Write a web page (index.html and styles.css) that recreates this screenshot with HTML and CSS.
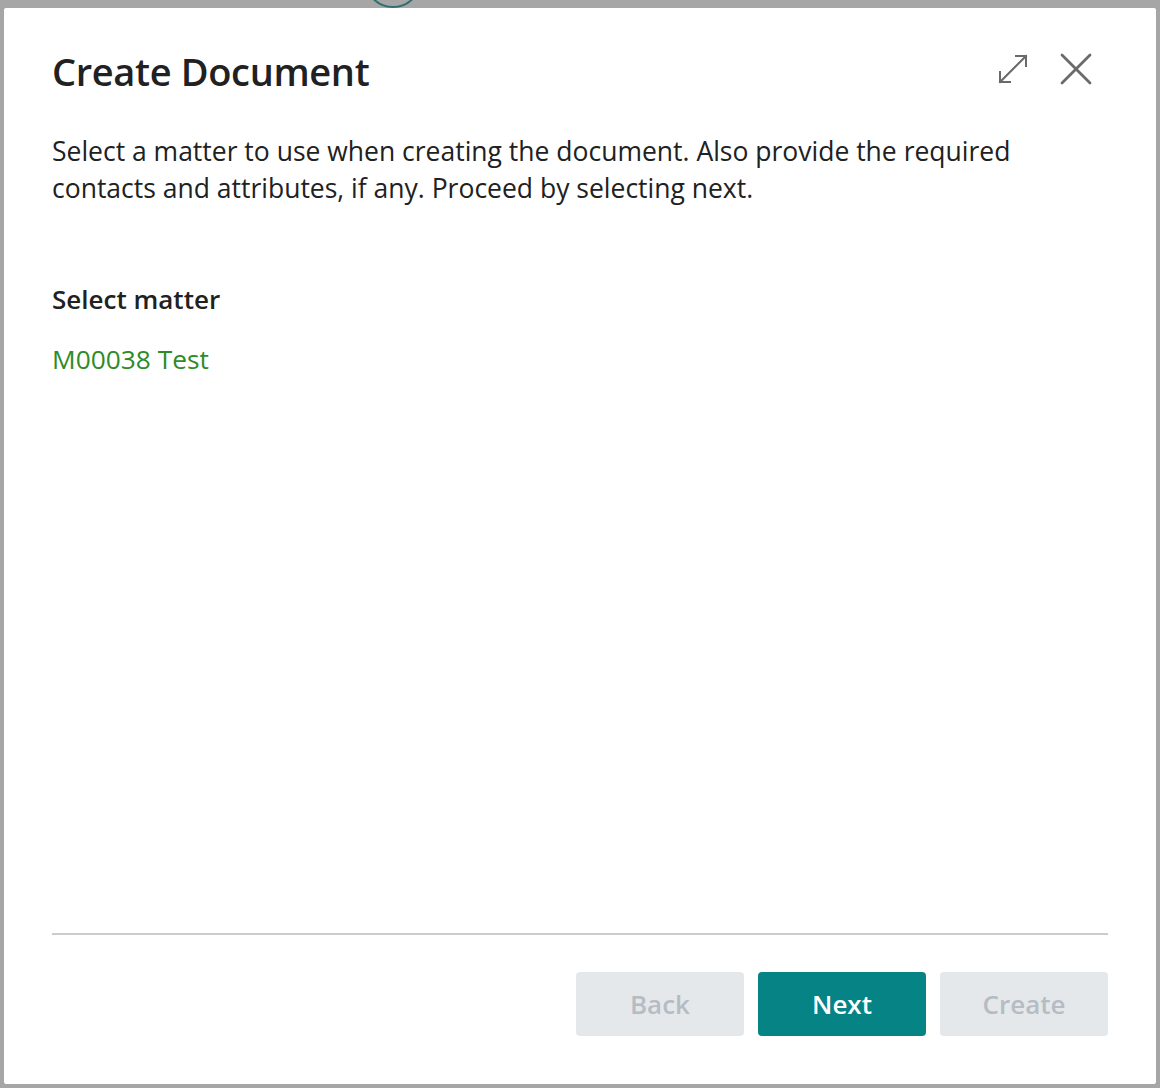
FILE: index.html
```html
<!DOCTYPE html>
<html lang="en">
<head>
<meta charset="utf-8">
<title>Create Document</title>
<link rel="stylesheet" href="styles.css">
</head>
<body>
<div class="backdrop">
  <div class="bg-avatar"></div>
  <div class="dialog">
    <div class="header">
      <h1 class="title">Create Document</h1>
      <div class="actions">
        <button class="icon-btn" aria-label="Expand">
          <svg width="32" height="32" viewBox="0 0 32 32" fill="none" stroke="#6a6a6a" stroke-width="2" stroke-linecap="square">
            <path d="M3 29 L29 3 M19 3 H29 V13 M3 19 V29 H13"/>
          </svg>
        </button>
        <button class="icon-btn" aria-label="Close">
          <svg width="32" height="32" viewBox="0 0 32 32" fill="none" stroke="#6a6a6a" stroke-width="2.8" stroke-linecap="round">
            <path d="M2 2 L30 30 M30 2 L2 30"/>
          </svg>
        </button>
      </div>
    </div>
    <p class="desc">Select a matter to use when creating the document. Also provide the required contacts and attributes, if any. Proceed by selecting next.</p>
    <div class="section">
      <div class="label">Select matter</div>
      <a class="matter" href="#">M00038 Test</a>
    </div>
    <div class="spacer"></div>
    <div class="footer">
      <button class="btn btn-disabled">Back</button>
      <button class="btn btn-primary">Next</button>
      <button class="btn btn-disabled">Create</button>
    </div>
  </div>
</div>
</body>
</html>
```
FILE: styles.css
```css
html, body {
  margin: 0;
  padding: 0;
  height: 100%;
}
body {
  background: #a6a6a6;
  font-family: "Open Sans", "Noto Sans", "Liberation Sans", sans-serif;
  color: #212121;
  overflow: hidden;
}
.backdrop {
  position: relative;
  padding: 8px 4px 4px 4px;
  height: 1088px;
  box-sizing: border-box;
}
.bg-avatar {
  position: absolute;
  left: 364px;
  top: -50px;
  width: 54px;
  height: 54px;
  border: 2px solid #2f6f6f;
  border-radius: 50%;
}
.dialog {
  position: relative;
  background: #ffffff;
  border-radius: 2px;
  height: 1076px;
  box-sizing: border-box;
  padding: 38px 48px 48px 48px;
  display: flex;
  flex-direction: column;
}
.header {
  display: flex;
  align-items: center;
  justify-content: space-between;
  height: 50px;
}
.title {
  margin: 0;
  font-size: 38px;
  font-weight: 600;
  line-height: 50px;
  letter-spacing: -0.35px;
  color: #212121;
}
.actions {
  display: flex;
  align-items: center;
  gap: 31px;
  margin-right: 16px;
  margin-bottom: 4px;
}
.icon-btn {
  background: none;
  border: 0;
  padding: 0;
  display: flex;
  cursor: pointer;
}
.desc {
  margin: 37px 0 0 0;
  font-size: 26.5px;
  line-height: 37px;
  color: #212121;
  max-width: 1000px;
}
.section {
  margin-top: 74px;
  display: flex;
  flex-direction: column;
  gap: 23px;
}
.label {
  font-size: 26px;
  font-weight: 600;
  line-height: 37px;
}
.matter {
  font-size: 26.3px;
  line-height: 37px;
  color: #2e8b26;
  text-decoration: none;
}
.spacer {
  flex: 1;
}
.footer {
  border-top: 2px solid #cccccc;
  padding-top: 37px;
  display: flex;
  justify-content: flex-end;
  gap: 14px;
}
.btn {
  width: 168px;
  height: 64px;
  border: 0;
  border-radius: 4px;
  font-family: inherit;
  font-size: 26px;
  font-weight: 600;
  cursor: pointer;
}
.btn-disabled {
  background: #e5e8eb;
  color: #b5bcc3;
}
.btn-primary {
  background: #058385;
  color: #ffffff;
}
```
